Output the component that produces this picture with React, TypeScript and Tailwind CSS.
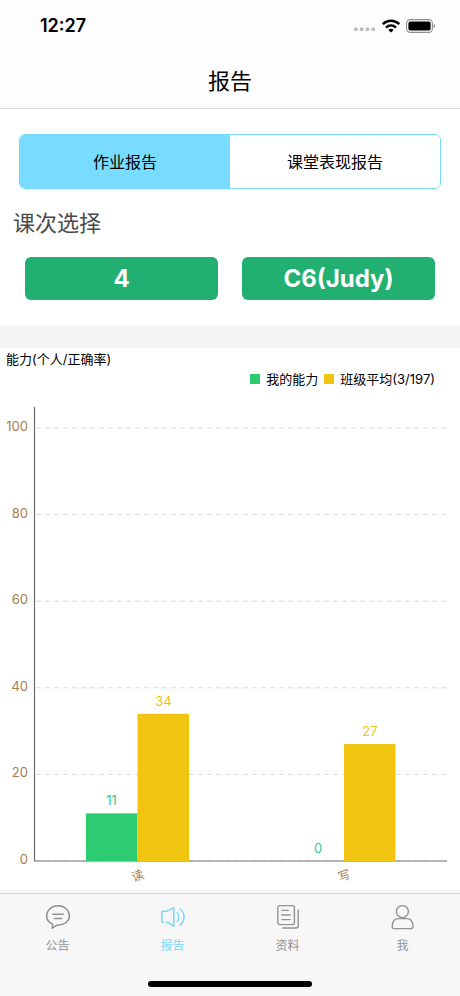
import { useState } from "react";

const chartData = [
	{ label: "读", mine: 11, average: 34 },
	{ label: "写", mine: 0, average: 27 }
]

const tabItems = [
	{ name: "公告", icon: <NoticeIcon />, active: false },
	{ name: "报告", icon: <SpeakerIcon />, active: true },
	{ name: "资料", icon: <DocumentIcon />, active: false },
	{ name: "我", icon: <UserIcon />, active: false }
]

export default function App() {
	return (
		<div className="flex min-h-screen flex-col bg-neutral-100 font-['Inter','Noto_Sans_CJK_SC',sans-serif] text-black">
			<header className="border-b border-[#dedede] bg-[#fdfdfd]">
				<StatusBar />
				<h1 className="pt-3.5 pb-[11px] text-center text-[22px] leading-8">报告</h1>
			</header>
			<main className="flex-1">
				<ReportFilter />
				<AbilityChart />
			</main>
			<TabBar />
		</div>
	)
}

function StatusBar() {
	return (
		<div className="flex h-[51px] items-center justify-between pr-6 pl-10">
			<span className="text-[18px] font-semibold">12:27</span>
			<div className="flex items-center gap-1.5">
				<svg width="22" height="14" viewBox="0 0 22 14" fill="#bdbdbd">
					<rect x="0" y="8.5" width="3.6" height="3.4" rx="1" />
					<rect x="5.8" y="8.5" width="3.6" height="3.4" rx="1" />
					<rect x="11.6" y="8.5" width="3.6" height="3.4" rx="1" />
					<rect x="17.4" y="8.5" width="3.6" height="3.4" rx="1" />
				</svg>
				<svg width="18" height="14" viewBox="0 0 18 14" fill="none" stroke="#000" strokeWidth="2.5">
					<path d="M0.8 5.2C5.4 0.6 12.6 0.6 17.2 5.2" />
					<path d="M4 8.6C6.9 5.8 11.1 5.8 14 8.6" />
					<path d="M9 13.6L6.3 10.9C7.9 9.5 10.1 9.5 11.7 10.9Z" fill="#000" stroke="none" />
				</svg>
				<svg width="30" height="14" viewBox="0 0 30 14">
					<rect x="0.6" y="0.6" width="25.8" height="12.8" rx="3.8" fill="none" stroke="#8f8f8f" strokeWidth="1.1" />
					<rect x="2.4" y="2.4" width="22.2" height="9.2" rx="2" />
					<path d="M27.6 4.8C29.6 5.6 29.6 8.4 27.6 9.2Z" fill="#8f8f8f" />
				</svg>
			</div>
		</div>
	)
}

function ReportFilter() {
	const [report, setReport] = useState("homework")

	return (
		<section className="bg-white py-[25px]">
			<div className="mx-[19px] flex h-[55px] overflow-hidden rounded-md border border-[#76d9fb] text-[16px]">
				<button
					type="button"
					onClick={() => setReport("homework")}
					className={["flex-1", report === "homework" ? "bg-[#77dcff]" : "bg-white"].join(" ")}
				>
					作业报告
				</button>
				<button
					type="button"
					onClick={() => setReport("class")}
					className={["flex-1", report === "class" ? "bg-[#77dcff]" : "bg-white"].join(" ")}
				>
					课堂表现报告
				</button>
			</div>
			<h2 className="mt-4 px-[13px] text-[22px] leading-9 text-[#4a4a4a]">课次选择</h2>
			<div className="mt-4 flex gap-6 px-[25px] text-[24px] font-bold text-white">
				<button type="button" className="h-[43px] flex-1 rounded-md bg-[#21b072]">4</button>
				<button type="button" className="h-[43px] flex-1 rounded-md bg-[#21b072]">C6(Judy)</button>
			</div>
		</section>
	)
}

function AbilityChart() {
	const baseline = 471
	const unit = 4.33
	const ticks = [0, 20, 40, 60, 80, 100]

	return (
		<section className="mt-[23px] bg-white pt-px">
			<h3 className="px-1.5 text-[13px] leading-5">能力(个人/正确率)</h3>
			<div className="flex items-center justify-end gap-1.5 pr-[25px] text-[13px] leading-5">
				<span className="flex items-center gap-1.5">
					<i className="size-2.5 bg-[#2ecc71]" />
					我的能力
				</span>
				<span className="flex items-center gap-1.5">
					<i className="size-2.5 bg-[#f1c40f]" />
					班级平均(3/197)
				</span>
			</div>
			<svg viewBox="0 0 460 500" className="mt-px block w-full" fontSize="13">
				{ticks.map((tick) => {
					const y = baseline - tick * unit
					return (
						<g key={tick}>
							<line x1="36" x2="447" y1={y} y2={y} stroke="#dadada" strokeWidth="1" strokeDasharray="5 4" />
							<text x="28" y={y + 3} textAnchor="end" fill="#a67c52">{tick}</text>
						</g>
					)
				})}
				<path d={`M34.5 17V${baseline}`} stroke="#6b6b6b" strokeWidth="1.2" fill="none" />
				<path d={`M34 ${baseline}H447`} stroke="#777" strokeWidth="1.2" fill="none" />
				{chartData.map((item, index) => {
					const center = 137.5 + index * 206.5
					const mineTop = baseline - item.mine * unit
					const averageTop = baseline - item.average * unit
					return (
						<g key={item.label} textAnchor="middle">
							<rect x={center - 51.5} y={mineTop} width="51.5" height={item.mine * unit} fill="#2ecc71" />
							<rect x={center} y={averageTop} width="51.5" height={item.average * unit} fill="#f1c40f" />
							<text x={center - 26} y={mineTop - 8} fill="#2ecc8a">{item.mine}</text>
							<text x={center + 26} y={averageTop - 8} fill="#efc11b">{item.average}</text>
							<text
								x={center}
								y={baseline + 19}
								fontSize="12"
								fill="#a67c52"
								transform={`rotate(-20 ${center} ${baseline + 14})`}
							>
								{item.label}
							</text>
						</g>
					)
				})}
			</svg>
		</section>
	)
}

function TabBar() {
	return (
		<footer className="border-t border-[#d4d4d4] bg-[#f7f7f7] pb-[9px]">
			<nav className="flex">
				{
					tabItems.map((item) => (
						<a
							key={item.name}
							href="#"
							className={["flex flex-1 flex-col items-center pt-2.5 text-[12px] leading-5", item.active ? "text-[#77d8fa]" : "text-[#929292]"].join(" ")}
						>
							{item.icon}
							<span className="mt-1.5">{item.name}</span>
						</a>
					))
				}
			</nav>
			<div className="mx-auto mt-[25px] h-1.5 w-[164px] rounded-full bg-black" />
		</footer>
	)
}

function NoticeIcon() {
	return (
		<svg width="26" height="26" viewBox="0 0 26 26" fill="none" stroke="currentColor" strokeWidth="1.5" strokeLinecap="round" strokeLinejoin="round">
			<path d="M7.6 20.2C3.9 18.6 1.6 15.5 1.6 11.8C1.6 6.2 6.6 1.8 13 1.8S24.4 6.2 24.4 11.8S19.4 21 13 21C11.6 21 10.8 21.6 7.2 24.2Z" />
			<path d="M7.8 10.2H18.2M9.4 14.4H16.8" />
		</svg>
	)
}

function SpeakerIcon() {
	return (
		<svg width="26" height="26" viewBox="0 0 26 26" fill="none" stroke="currentColor" strokeWidth="1.5" strokeLinecap="round" strokeLinejoin="round">
			<path d="M3.6 18.2H3C2.2 18.2 1.8 17.8 1.8 17V8.4C1.8 7.6 2.2 7.2 3 7.2H7.2L13.8 3.6V22.4L7.4 18.2H6.6" />
			<path d="M17.2 8.4C19.3 11 19.3 14.8 17.2 17.4" />
			<path d="M20 5C25.4 9.2 25.4 16.8 20 21" />
		</svg>
	)
}

function DocumentIcon() {
	return (
		<svg width="26" height="26" viewBox="0 0 26 26" fill="none" stroke="currentColor" strokeWidth="1.4" strokeLinecap="round" strokeLinejoin="round">
			<rect x="2.8" y="1.6" width="16.6" height="19" rx="2" />
			<path d="M6.8 6.4H13.2M6.8 11H15.2M6.8 15.6H15.2" />
			<path d="M23.2 6V21.8C23.2 23.2 22.4 24 21 24H7.8" />
		</svg>
	)
}

function UserIcon() {
	return (
		<svg width="26" height="26" viewBox="0 0 26 26" fill="none" stroke="currentColor" strokeWidth="1.4" strokeLinecap="round" strokeLinejoin="round">
			<circle cx="12.4" cy="7.6" r="6" />
			<path d="M8.2 14.6H17C20.6 14.6 22.8 17.8 23 22.2C23 23.8 22.4 24.6 21 24.6H4.2C2.8 24.6 2.2 23.8 2.2 22.2C2.4 17.8 4.6 14.6 8.2 14.6Z" />
		</svg>
	)
}
